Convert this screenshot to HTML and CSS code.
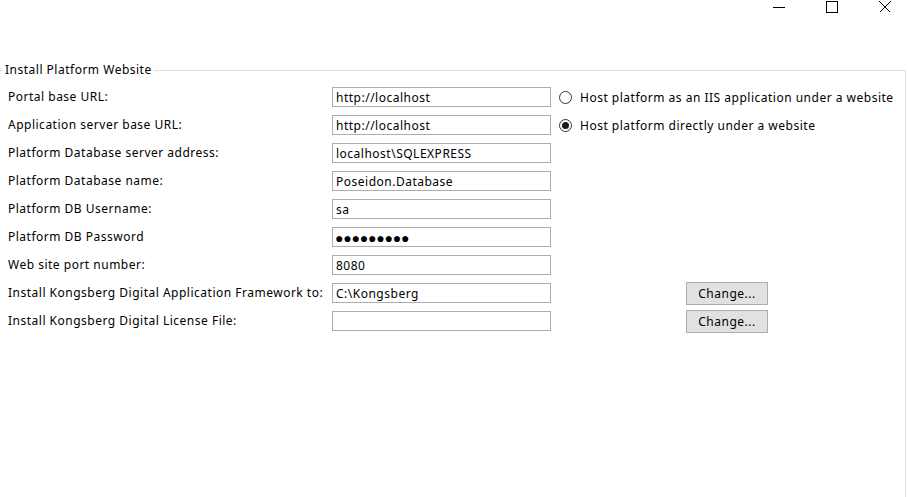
FILE: index.html
```html
<!DOCTYPE html>
<html lang="en">
<head>
<meta charset="utf-8">
<title>Install Platform Website</title>
<link rel="stylesheet" href="styles.css">
</head>
<body>
<div class="titlebar">
  <svg class="cap" viewBox="0 0 12 12" width="12" height="12"><path d="M0 6.5H12" stroke="#000" stroke-width="1" fill="none"/></svg>
  <svg class="cap" viewBox="0 0 12 12" width="12" height="12"><rect x="0.5" y="0.5" width="11" height="11" stroke="#000" stroke-width="1" fill="none"/></svg>
  <svg class="cap" viewBox="0 0 12 12" width="12" height="12"><path d="M0.5 0.5L11.5 11.5M11.5 0.5L0.5 11.5" stroke="#000" stroke-width="1" fill="none"/></svg>
</div>
<fieldset class="group">
  <legend class="group-title">Install Platform Website</legend>
  <div class="form">
    <label class="lbl">Portal base URL:</label>
    <input class="tb" type="text" value="http://localhost">
    <label class="opt"><input class="radio" type="radio" name="host"><span>Host platform as an IIS application under a website</span></label>

    <label class="lbl">Application server base URL:</label>
    <input class="tb" type="text" value="http://localhost">
    <label class="opt"><input class="radio" type="radio" name="host" checked><span>Host platform directly under a website</span></label>

    <label class="lbl">Platform Database server address:</label>
    <input class="tb" type="text" value="localhost\SQLEXPRESS">
    <span></span>

    <label class="lbl">Platform Database name:</label>
    <input class="tb" type="text" value="Poseidon.Database">
    <span></span>

    <label class="lbl">Platform DB Username:</label>
    <input class="tb" type="text" value="sa">
    <span></span>

    <label class="lbl">Platform DB Password</label>
    <input class="tb pw" type="text" value="●●●●●●●●●">
    <span></span>

    <label class="lbl">Web site port number:</label>
    <input class="tb" type="text" value="8080">
    <span></span>

    <label class="lbl">Install Kongsberg Digital Application Framework to:</label>
    <input class="tb" type="text" value="C:\Kongsberg">
    <button class="btn" type="button">Change...</button>

    <label class="lbl">Install Kongsberg Digital License File:</label>
    <input class="tb" type="text" value="">
    <button class="btn" type="button">Change...</button>
  </div>
</fieldset>
</body>
</html>
```
FILE: styles.css
```css
html, body {
  margin: 0;
  padding: 0;
  background: #ffffff;
  overflow: hidden;
}
body {
  width: 908px;
  height: 497px;
  font-family: "Noto Sans", "Open Sans", sans-serif;
  font-size: 12px;
  letter-spacing: 0.5px;
  color: #000;
}
.titlebar {
  display: flex;
  justify-content: flex-end;
  gap: 41px;
  padding: 1px 17px 0 0;
  height: 12px;
}
.cap {
  display: block;
  shape-rendering: crispEdges;
}
.group {
  margin: 49px 0 0 -1px;
  width: 907px;
  height: 435px;
  box-sizing: border-box;
  border: 1px solid #d5dfe5;
  border-bottom: 0;
  border-radius: 3px 3px 0 0;
  padding: 9px 0 0 3px;
}
.group-title {
  padding: 0 2px;
  margin-left: 0;
  font-size: 12px;
  line-height: 16px;
}
.form {
  display: grid;
  grid-template-columns: 324px 219px 1fr;
  grid-auto-rows: 20px;
  row-gap: 8px;
  align-items: center;
  margin-left: 5px;
}
.lbl {
  white-space: nowrap;
  line-height: 20px;
}
.tb {
  box-sizing: border-box;
  width: 219px;
  height: 20px;
  margin: 0;
  border: 1px solid #abadb3;
  padding: 0 3px;
  font-family: inherit;
  font-size: 12px;
  letter-spacing: inherit;
  color: #000;
  background: #fff;
  outline: none;
}
.pw {
  font-size: 14px;
  letter-spacing: -0.2px;
  padding-left: 2px;
}
.opt {
  display: flex;
  align-items: center;
  gap: 8px;
  margin-left: 8px;
  white-space: nowrap;
}
.radio {
  appearance: none;
  -webkit-appearance: none;
  width: 13px;
  height: 13px;
  margin: 0;
  border: 1px solid #333;
  border-radius: 50%;
  background: #fff;
  display: grid;
  place-content: center;
}
.radio:checked::before {
  content: "";
  width: 7px;
  height: 7px;
  border-radius: 50%;
  background: #1a1a1a;
}
.btn {
  justify-self: start;
  margin-left: 135px;
  width: 82px;
  height: 23px;
  box-sizing: border-box;
  border: 1px solid #adadad;
  background: #e1e1e1;
  font-family: inherit;
  font-size: 12px;
  letter-spacing: inherit;
  color: #000;
  padding: 0;
}
```
